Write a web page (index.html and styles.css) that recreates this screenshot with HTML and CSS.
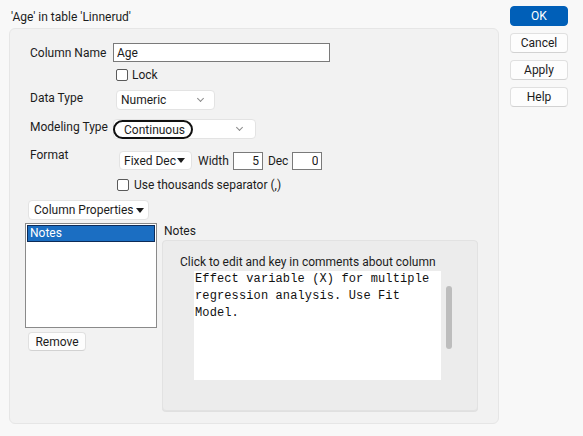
FILE: index.html
```html
<!DOCTYPE html>
<html lang="en">
<head>
    <meta charset="UTF-8">
    <meta name="viewport" content="width=device-width, initial-scale=1.0">
    <title>Column Info - Age</title>
    <link rel="stylesheet" href="styles.css">
</head>
<body>
    <div class="dialog">
        <div class="main">
            <div class="title">'Age' in table 'Linnerud'</div>
            <div class="panel">
                <div class="row">
                    <span class="label">Column Name</span>
                    <input class="text-input name-input" type="text" value="Age">
                </div>

                <div class="row row-lock">
                    <span class="label"></span>
                    <span class="check lock-check"><span class="box"></span>Lock</span>
                </div>

                <div class="row row-top row-data">
                    <span class="label">Data Type</span>
                    <div class="combo data-combo">
                        <span>Numeric</span>
                        <span class="chevron"></span>
                    </div>
                </div>

                <div class="row row-top row-model">
                    <span class="label">Modeling Type</span>
                    <div class="combo model-combo">
                        <span class="focus-ring">Continuous</span>
                        <span class="chevron"></span>
                    </div>
                </div>

                <div class="row row-format">
                    <span class="label format-label">Format</span>
                    <div class="menu-btn format-btn">Fixed Dec <span class="caret"></span></div>
                    <span class="field-label width-label">Width</span>
                    <input class="text-input num-input" type="text" value="5">
                    <span class="field-label dec-label">Dec</span>
                    <input class="text-input num-input" type="text" value="0">
                </div>

                <div class="row row-sep">
                    <span class="label"></span>
                    <span class="check sep-check"><span class="box"></span>Use thousands separator (,)</span>
                </div>

                <div class="menu-btn props-btn">Column Properties <span class="caret"></span></div>

                <div class="props">
                    <div class="props-left">
                        <ul class="prop-list">
                            <li class="selected">Notes</li>
                        </ul>
                        <button class="btn remove-btn">Remove</button>
                    </div>
                    <div class="props-right">
                        <div class="notes-title">Notes</div>
                        <div class="notes-panel">
                            <div class="notes-hint">Click to edit and key in comments about column</div>
                            <div class="notes-body">
                                <div class="notes-text">Effect variable (X) for multiple<br>regression analysis. Use Fit<br>Model.</div>
                                <div class="scroll-thumb"></div>
                            </div>
                        </div>
                    </div>
                </div>
            </div>
        </div>

        <div class="actions">
            <button class="btn ok-btn">OK</button>
            <button class="btn">Cancel</button>
            <button class="btn">Apply</button>
            <button class="btn">Help</button>
        </div>
    </div>
</body>
</html>
```

FILE: styles.css
```css
* {
    box-sizing: border-box;
}
body {
    margin: 0;
    width: 583px;
    height: 436px;
    overflow: hidden;
    background-color: #f8f8f8;
    font-family: Roboto, "Noto Sans", sans-serif;
    font-size: 12px;
    color: #1c1c1c;
}
.dialog {
    display: flex;
}
.main {
    width: 510px;
    padding-left: 9px;
}
.title {
    height: 28px;
    padding: 10px 0 0 2px;
    line-height: 15px;
}
.panel {
    width: 490px;
    height: 396px;
    padding: 14px 0 0 20px;
    background-color: #f2f2f2;
    border: 1px solid #e6e6e6;
    border-radius: 6px;
}

/* label + control rows */
.row {
    display: flex;
    align-items: center;
}
.row-top {
    align-items: flex-start;
}
.label {
    width: 83px;
    flex: none;
    line-height: 16px;
    white-space: nowrap;
}
.row-lock {
    margin-top: 6px;
}
.row-data, .row-model {
    margin-top: 9px;
}
.row-format {
    margin-top: 12px;
}
.format-label {
    margin-top: -11px;
}
.row-sep {
    margin-top: 8px;
}

.text-input {
    height: 19px;
    padding: 0 3px;
    border: 1px solid #7a7a7a;
    background-color: #fff;
    font: inherit;
    color: #1c1c1c;
    outline: none;
}
.name-input {
    width: 217px;
}
.num-input {
    width: 30px;
    height: 18px;
    text-align: right;
}

.check {
    display: flex;
    align-items: center;
    gap: 4px;
    height: 13px;
}
.lock-check {
    margin-left: 3px;
}
.sep-check {
    margin-left: 4px;
    gap: 5px;
}
.box {
    width: 12px;
    height: 12px;
    border: 1px solid #5a5a5a;
    border-radius: 2px;
    background-color: #fff;
}

/* drop-down combos */
.combo {
    display: flex;
    align-items: center;
    justify-content: space-between;
    height: 20px;
    background-color: #fff;
    border: 1px solid #e3e3e3;
    border-radius: 4px;
}
.data-combo {
    width: 99px;
    margin-left: 3px;
    padding: 0 11px 0 4px;
}
.model-combo {
    width: 143px;
    padding: 0 13px 0 0;
}
.focus-ring {
    width: 80px;
    height: 19px;
    margin-left: -1px;
    padding-left: 9px;
    line-height: 16px;
    border: 2px solid #111;
    border-radius: 10px;
}
.chevron {
    width: 5px;
    height: 5px;
    margin-bottom: 3px;
    border-right: 1px solid #8a8a8a;
    border-bottom: 1px solid #8a8a8a;
    transform: rotate(45deg);
}

/* buttons with a filled caret */
.menu-btn {
    display: flex;
    align-items: center;
    justify-content: space-between;
    height: 20px;
    background-color: #fff;
    border: 1px solid #e3e3e3;
    border-radius: 4px;
}
.caret {
    width: 0;
    height: 0;
    border-left: 4px solid transparent;
    border-right: 4px solid transparent;
    border-top: 5px solid #1c1c1c;
}
.format-btn {
    width: 73px;
    height: 19px;
    margin-left: 6px;
    padding: 0 6px 0 4px;
}
.field-label {
    margin-right: 4px;
}
.width-label {
    margin-left: 6px;
}
.dec-label {
    margin-left: 5px;
}
.props-btn {
    width: 121px;
    margin: 9px 0 0 -2px;
    padding: 0 4px 0 5px;
}

/* column properties list and the notes editor */
.props {
    display: flex;
    margin: 3px 0 0 -5px;
}
.prop-list {
    width: 132px;
    height: 105px;
    margin: 0;
    padding: 1px;
    list-style: none;
    background-color: #fff;
    border: 1px solid #8a8a8a;
}
.prop-list li {
    height: 17px;
    padding-left: 2px;
    line-height: 15px;
}
.prop-list .selected {
    color: #fff;
    background-color: #1b6ec2;
    border: 1px solid #0d2b57;
}
.btn {
    display: block;
    height: 20px;
    padding: 0;
    font: inherit;
    color: #1c1c1c;
    background-color: #fdfdfd;
    border: 1px solid #e0e0e0;
    border-bottom-color: #d2d2d2;
    border-radius: 4px;
}
.remove-btn {
    width: 58px;
    height: 19px;
    margin: 4px 0 0 3px;
}
.props-right {
    margin-left: 5px;
}
.notes-title {
    height: 17px;
    padding-left: 2px;
    line-height: 16px;
}
.notes-panel {
    width: 316px;
    height: 171px;
    padding: 13px 0 0 17px;
    background-color: #ececec;
    border: 1px solid #e2e2e2;
    border-radius: 4px;
    box-shadow: 0 1px 0 #e0e0e0;
}
.notes-hint {
    line-height: 16px;
}
.notes-body {
    display: flex;
    gap: 5px;
    margin: 1px 0 0 14px;
}
.notes-text {
    width: 247px;
    height: 109px;
    padding: 0 1px;
    background-color: #fff;
    font-family: "Liberation Mono", monospace;
    font-size: 12px;
    letter-spacing: 0.12px;
    line-height: 17px;
    color: #111;
}
.scroll-thumb {
    width: 6px;
    height: 63px;
    margin-top: 15px;
    background-color: #bdbdbd;
    border-radius: 3px;
}

/* dialog buttons on the right */
.actions {
    display: flex;
    flex-direction: column;
    gap: 7px;
    padding-top: 6px;
}
.actions .btn {
    width: 58px;
}
.ok-btn {
    color: #fff;
    background-color: #005fb8;
    border-color: #005fb8;
}
```
